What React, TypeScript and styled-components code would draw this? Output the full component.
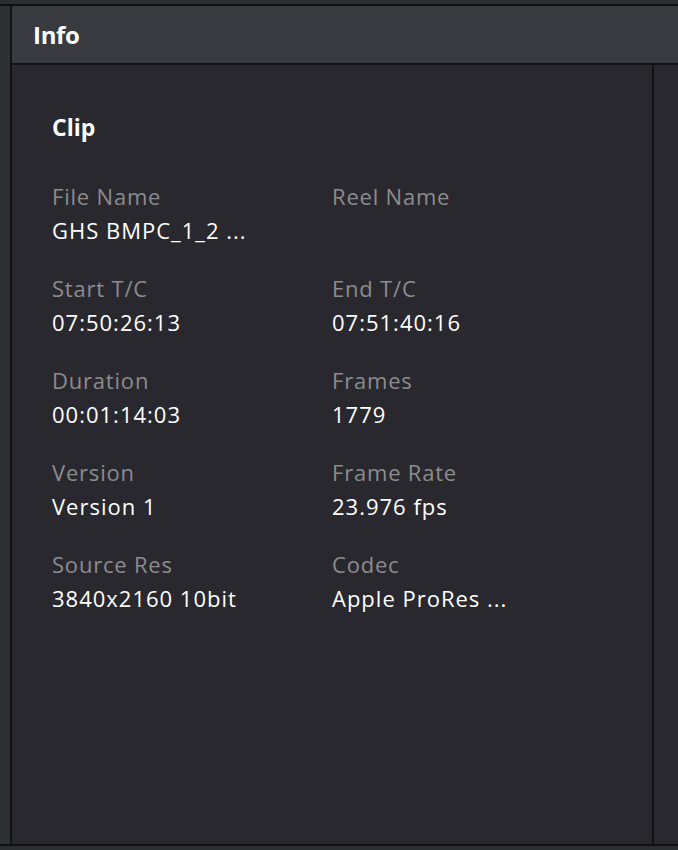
import styled, { createGlobalStyle } from 'styled-components';

const GlobalStyle = createGlobalStyle`
  html, body {
    margin: 0;
    padding: 0;
    background: #1f1f23;
  }
  body {
    font-family: "Open Sans", "Liberation Sans", sans-serif;
    -webkit-font-smoothing: antialiased;
  }
`;

interface Field {
  label: string;
  value: string;
}

const fields: Field[] = [
  { label: 'File Name', value: 'GHS BMPC_1_2 ...' },
  { label: 'Reel Name', value: '' },
  { label: 'Start T/C', value: '07:50:26:13' },
  { label: 'End T/C', value: '07:51:40:16' },
  { label: 'Duration', value: '00:01:14:03' },
  { label: 'Frames', value: '1779' },
  { label: 'Version', value: 'Version 1' },
  { label: 'Frame Rate', value: '23.976 fps' },
  { label: 'Source Res', value: '3840x2160 10bit' },
  { label: 'Codec', value: 'Apple ProRes ...' },
];

const Screen = styled.div`
  width: 678px;
  height: 850px;
  display: flex;
  flex-direction: column;
  background: #2c2d31;
  overflow: hidden;
`;

const TopStrip = styled.div`
  height: 4px;
  flex-shrink: 0;
  border-bottom: 2px solid #111113;
`;

const Main = styled.div`
  height: 838px;
  display: flex;
  flex-shrink: 0;
  border-bottom: 2px solid #111113;
`;

const SideStrip = styled.div`
  width: 10px;
  flex-shrink: 0;
  background: #2f3034;
  border-right: 2px solid #111113;
`;

const Panel = styled.div`
  flex: 1;
  display: flex;
  flex-direction: column;
  min-width: 0;
`;

const Header = styled.div`
  height: 57px;
  flex-shrink: 0;
  display: flex;
  align-items: center;
  padding-left: 21px;
  background: #393a3f;
  border-bottom: 2px solid #111113;
`;

const HeaderTitle = styled.h1`
  margin: 0;
  font-size: 24px;
  font-weight: 700;
  color: #ffffff;
  letter-spacing: -0.3px;
`;

const BodyRow = styled.div`
  flex: 1;
  display: flex;
  background: #28282e;
`;

const Content = styled.div`
  width: 642px;
  flex-shrink: 0;
  padding: 46px 0 0 40px;
  box-sizing: border-box;
  border-right: 2px solid #111113;
`;

const RightStrip = styled.div`
  flex: 1;
  background: #28282e;
`;

const SectionTitle = styled.h2`
  margin: 0 0 36px;
  font-size: 23px;
  line-height: 32px;
  font-weight: 700;
  color: #ffffff;
`;

const Grid = styled.div`
  display: grid;
  grid-template-columns: 280px 280px;
  row-gap: 23px;
`;

const Item = styled.div`
  display: flex;
  flex-direction: column;
`;

const Label = styled.div`
  font-size: 22px;
  line-height: 34px;
  letter-spacing: 0.8px;
  color: #8c8c8e;
`;

const Value = styled.div`
  font-size: 22px;
  line-height: 35px;
  height: 35px;
  font-weight: 500;
  letter-spacing: 1px;
  color: #ffffff;
  white-space: nowrap;
`;

export default function App() {
  return (
    <>
      <GlobalStyle />
      <Screen>
        <TopStrip />
        <Main>
          <SideStrip />
          <Panel>
            <Header>
              <HeaderTitle>Info</HeaderTitle>
            </Header>
            <BodyRow>
              <Content>
                <SectionTitle>Clip</SectionTitle>
                <Grid>
                  {fields.map((f) => (
                    <Item key={f.label}>
                      <Label>{f.label}</Label>
                      <Value>{f.value}</Value>
                    </Item>
                  ))}
                </Grid>
              </Content>
              <RightStrip />
            </BodyRow>
          </Panel>
        </Main>
      </Screen>
    </>
  );
}
